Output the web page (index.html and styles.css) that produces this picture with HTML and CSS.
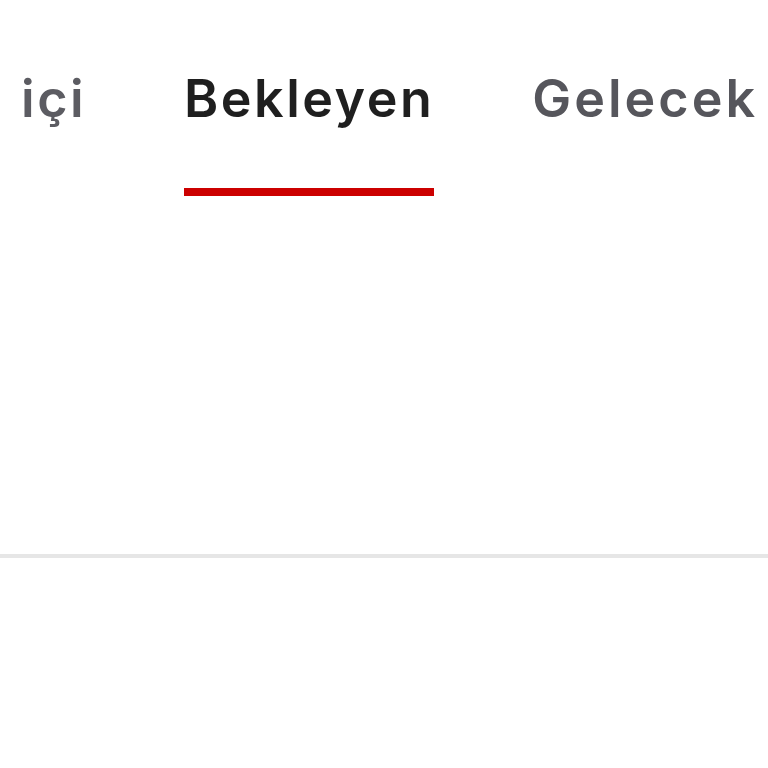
FILE: index.html
```html
<!DOCTYPE html>
<html lang="tr">
<head>
<meta charset="utf-8">
<link rel="stylesheet" href="styles.css">
</head>
<body>
<div class="page">
  <nav class="tabs">
    <div class="tab first"><span class="label">Oyun içi</span></div>
    <div class="tab active"><span class="label">Bekleyen</span></div>
    <div class="tab last"><span class="label">Gelecek</span></div>
  </nav>
  <div class="content"></div>
  <div class="divider"></div>
</div>
</body>
</html>
```

FILE: styles.css
```css
html, body {
  margin: 0;
  padding: 0;
  background: #ffffff;
}
.page {
  width: 768px;
  height: 768px;
  overflow: hidden;
}
.tabs {
  display: flex;
  justify-content: flex-end;
  gap: 98px;
  width: 1000px;
  margin-left: -242px;
  padding-top: 67px;
  font-family: Inter, "Noto Sans", sans-serif;
  font-weight: 600;
  font-size: 52px;
  line-height: 64px;
  letter-spacing: 2.5px;
}
.tab {
  display: flex;
  flex-direction: column;
  color: #56565c;
  white-space: nowrap;
}
.tab .label {
  display: block;
  padding-bottom: 57px;
  border-bottom: 8px solid transparent;
}
.tab.first {
  color: #5c5c62;
}
.tab.last {
  letter-spacing: 3px;
}
.tab.active {
  color: #1f1f1f;
}
.tab.active .label {
  border-bottom-color: #cc0000;
}
.content {
  height: 358px;
}
.divider {
  height: 4px;
  background: #e6e6e6;
}
```
